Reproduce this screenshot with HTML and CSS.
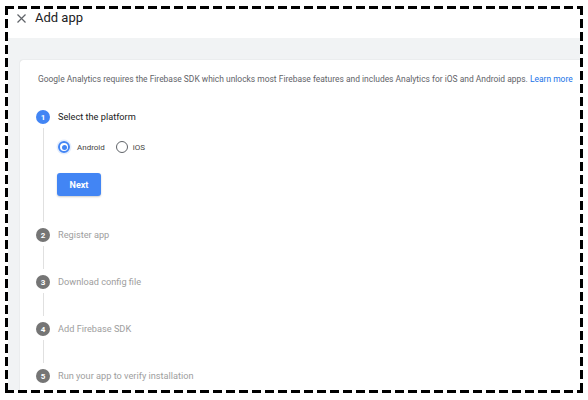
FILE: index.html
```html
<!DOCTYPE html>
<html>
<head>
<meta charset="utf-8">
<link rel="stylesheet" href="styles.css">
</head>
<body>
<div class="frame">
  <header class="topbar">
    <svg class="close" width="9" height="9" viewBox="0 0 9 9"><path d="M0.5 0.5L8.5 8.5M8.5 0.5L0.5 8.5" stroke="#5f6368" stroke-width="1.2"/></svg>
    <span class="title">Add app</span>
  </header>
  <main class="stage">
    <section class="card">
      <p class="desc">Google Analytics requires the Firebase SDK which unlocks most Firebase features and includes Analytics for iOS and Android apps. <a class="learn">Learn more</a></p>
      <div class="step step-active">
        <div class="rail"><span class="num num-active">1</span><span class="line"></span></div>
        <div class="body body-active">
          <div class="step-title dark">Select the platform</div>
          <div class="radios">
            <label class="radio"><span class="ring ring-on"><span class="dot"></span></span>Android</label>
            <label class="radio"><span class="ring"></span>iOS</label>
          </div>
          <button class="next">Next</button>
        </div>
      </div>
      <div class="step">
        <div class="rail"><span class="num">2</span><span class="line"></span></div>
        <div class="body"><div class="step-title">Register app</div></div>
      </div>
      <div class="step">
        <div class="rail"><span class="num">3</span><span class="line"></span></div>
        <div class="body"><div class="step-title">Download config file</div></div>
      </div>
      <div class="step">
        <div class="rail"><span class="num">4</span><span class="line"></span></div>
        <div class="body"><div class="step-title">Add Firebase SDK</div></div>
      </div>
      <div class="step">
        <div class="rail"><span class="num">5</span></div>
        <div class="body"><div class="step-title">Run your app to verify installation</div></div>
      </div>
    </section>
  </main>
</div>
</body>
</html>
```
FILE: styles.css
```css
html, body {
  margin: 0;
  padding: 0;
  background: #ffffff;
}
body {
  font-family: Roboto, "Liberation Sans", sans-serif;
}
.frame {
  margin: 6px 0 0 5px;
  width: 578px;
  height: 387px;
  box-sizing: border-box;
  padding: 3px;
  background:
    repeating-linear-gradient(90deg, #000 0 9px, transparent 9px 13px) top left / 100% 3px no-repeat,
    repeating-linear-gradient(90deg, #000 0 9px, transparent 9px 13px) bottom left / 100% 3px no-repeat,
    repeating-linear-gradient(180deg, #000 0 9px, transparent 9px 13px) top left / 3px 100% no-repeat,
    repeating-linear-gradient(180deg, #000 0 9px, transparent 9px 13px) top right / 3px 100% no-repeat,
    #fff;
  display: flex;
  flex-direction: column;
}
.frame > * {
  overflow: hidden;
}
.topbar {
  height: 29px;
  flex: 0 0 29px;
  display: flex;
  align-items: center;
  padding: 2px 0 0 9px;
  box-sizing: border-box;
  background: #fff;
}
.topbar > * {
  align-self: flex-start;
}
.close {
  display: block;
  margin: 3px 9px 0 0;
}
.title {
  font-size: 13px;
  line-height: 14px;
  color: #202124;
}
.stage {
  flex: 1;
  background: #f1f3f4;
  padding: 22px 0 0 12px;
}
.card {
  background: #fff;
  border-radius: 3px 0 0 0;
  box-shadow: 0 0 1px rgba(0,0,0,0.25);
  height: 100%;
  padding: 14px 0 0 16px;
  box-sizing: border-box;
}
.desc {
  margin: 0 0 26px 2px;
  font-size: 8.45px;
  line-height: 10px;
  color: #5f6368;
  white-space: nowrap;
}
.learn {
  color: #1a73e8;
}
.step {
  display: flex;
}
.rail {
  width: 14px;
  display: flex;
  flex-direction: column;
  align-items: center;
}
.num {
  width: 14px;
  height: 14px;
  flex: 0 0 14px;
  border-radius: 50%;
  background: #757575;
  color: #fff;
  font-size: 8px;
  font-weight: 700;
  display: flex;
  align-items: center;
  justify-content: center;
}
.num-active {
  background: #4285f4;
}
.line {
  flex: 1;
  width: 1px;
  background: #e0e0e0;
  margin: 4px 0 6px;
}
.body {
  margin-left: 8px;
  padding-bottom: 33px;
}
.body-active {
  padding-bottom: 32px;
}
.step-title {
  font-size: 9.2px;
  line-height: 14px;
  color: #9e9e9e;
}
.step-title.dark {
  color: #212121;
}
.radios {
  margin-top: 17px;
  display: flex;
  align-items: center;
  height: 12px;
}
.radio {
  display: flex;
  align-items: center;
  font-size: 8px;
  color: #444;
  margin-right: 11px;
}
.ring {
  width: 12px;
  height: 12px;
  box-sizing: border-box;
  border: 1.5px solid #5f6368;
  border-radius: 50%;
  margin-right: 5px;
  display: flex;
  align-items: center;
  justify-content: center;
}
.ring-on {
  border: 2px solid #4285f4;
  box-shadow: 0 0 0 1.5px rgba(66,133,244,0.15);
  margin-right: 7px;
}
.dot {
  width: 5px;
  height: 5px;
  border-radius: 50%;
  background: #4285f4;
}
.next {
  margin-top: 20px;
  margin-left: -1px;
  display: block;
  width: 44px;
  height: 23px;
  border: 0;
  border-radius: 3px;
  background: #4285f4;
  color: #fff;
  font-family: Roboto, "Liberation Sans", sans-serif;
  font-weight: 700;
  font-size: 9px;
  box-shadow: 0 1px 2px rgba(0,0,0,0.2);
  padding: 0;
}
```
